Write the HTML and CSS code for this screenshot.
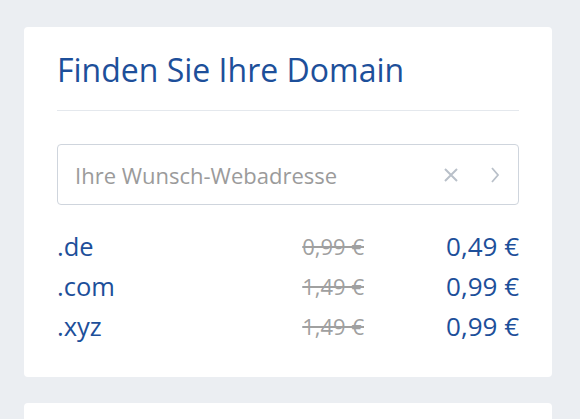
FILE: index.html
```
<!DOCTYPE html>
<html lang="de">
<head>
<meta charset="utf-8">
<link rel="stylesheet" href="styles.css">
</head>
<body>
<div class="page">
  <section class="card">
    <h2 class="title">Finden Sie Ihre Domain</h2>
    <hr class="divider">
    <div class="search">
      <span class="placeholder">Ihre Wunsch-Webadresse</span>
      <svg class="icon-x" width="16" height="16" viewBox="0 0 16 16"><path d="M2 2 L14 14 M14 2 L2 14" stroke="#b9c0c9" stroke-width="2" fill="none"/></svg>
      <svg class="icon-chev" width="10" height="18" viewBox="0 0 10 18"><path d="M2 2 L8 9 L2 16" stroke="#b9c0c9" stroke-width="1.8" fill="none"/></svg>
    </div>
    <div class="prices">
      <span class="tld">.de</span><span class="old">0,99 €</span><span class="new">0,49 €</span>
      <span class="tld">.com</span><span class="old">1,49 €</span><span class="new">0,99 €</span>
      <span class="tld">.xyz</span><span class="old">1,49 €</span><span class="new">0,99 €</span>
    </div>
  </section>
  <section class="card card-next"></section>
</div>
</body>
</html>
```
FILE: styles.css
```
html, body { margin: 0; padding: 0; }
body {
  background: #ebeef2;
  font-family: "Open Sans", "Noto Sans", sans-serif;
  overflow: hidden;
  height: 419px;
}
.page {
  padding: 27px 28px 0 24px;
  display: flex;
  flex-direction: column;
  gap: 26px;
}
.card {
  background: #fff;
  border-radius: 4px;
  padding: 24px 33px 31px 33px;
}
.card-next { height: 16px; padding: 0; border-radius: 4px 4px 0 0; }
.title {
  margin: 0;
  font-size: 32px;
  line-height: 38px;
  font-weight: 400;
  color: #1d4f9a;
}
.divider {
  border: 0;
  border-top: 1px solid #e4e8ed;
  margin: 21px 0 33px 0;
}
.search {
  box-sizing: border-box;
  height: 61px;
  border: 1px solid #cfd5dd;
  border-radius: 4px;
  display: flex;
  align-items: center;
  padding: 0 18px 0 17px;
}
.placeholder {
  flex: 1;
  font-size: 22px;
  color: #9b9b9b;
}
.icon-x { margin-right: 31px; }
.prices {
  margin-top: 21px;
  display: grid;
  grid-template-columns: 1fr auto 155px;
  line-height: 40px;
  align-items: center;
}
.tld { font-size: 25.5px; color: #1d4f9a; }
.old {
  font-size: 22px;
  color: #a0a0a0;
  text-decoration: line-through;
  text-align: right;
}
.new {
  font-size: 26px;
  color: #1d4f9a;
  text-align: right;
}
```
